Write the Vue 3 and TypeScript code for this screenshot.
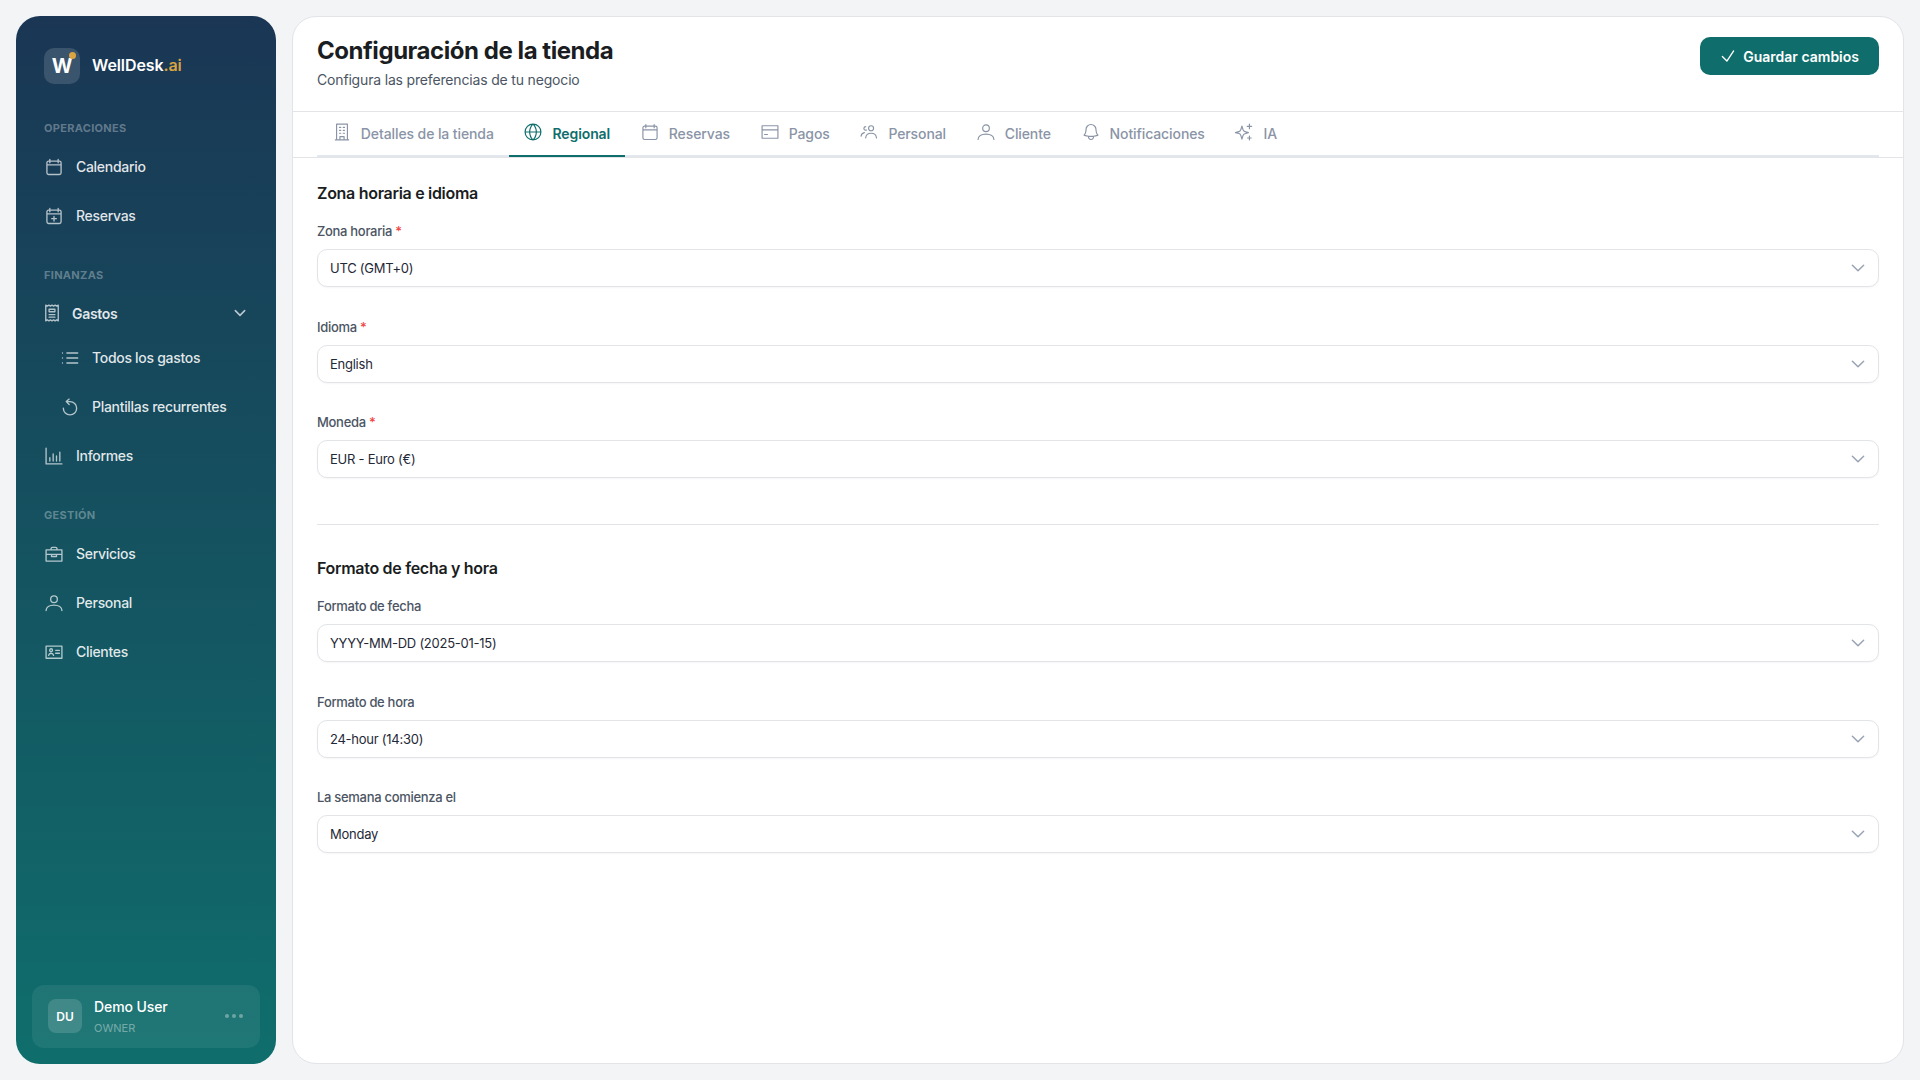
<template>
  <div class="shell">
    <aside class="sidebar">
      <div class="brand">
        <div class="brand-mark">W<span class="brand-dot"></span></div>
        <span class="brand-name">WellDesk<span class="brand-ai">.ai</span></span>
      </div>

      <p class="group-label first">OPERACIONES</p>
      <a class="nav-item"><svg class="nav-icon" viewBox="0 0 24 24"><path :d="icons.calendar" /></svg>Calendario</a>
      <a class="nav-item"><svg class="nav-icon" viewBox="0 0 24 24"><path :d="icons.calendarPlus" /></svg>Reservas</a>

      <p class="group-label">FINANZAS</p>
      <a class="nav-parent">
        <svg class="nav-icon" viewBox="0 0 24 24"><path :d="icons.receipt" /></svg>
        <span>Gastos</span>
        <svg class="nav-chevron" viewBox="0 0 24 24"><path d="M5 8.5l7 7 7-7" /></svg>
      </a>
      <a class="nav-sub"><svg class="nav-icon" viewBox="0 0 24 24"><path :d="icons.list" /></svg>Todos los gastos</a>
      <a class="nav-sub"><svg class="nav-icon" viewBox="0 0 24 24"><path :d="icons.recurring" /></svg>Plantillas recurrentes</a>
      <a class="nav-item"><svg class="nav-icon" viewBox="0 0 24 24"><path :d="icons.chart" /></svg>Informes</a>

      <p class="group-label">GESTIÓN</p>
      <a class="nav-item"><svg class="nav-icon" viewBox="0 0 24 24"><path :d="icons.briefcase" /></svg>Servicios</a>
      <a class="nav-item"><svg class="nav-icon" viewBox="0 0 24 24"><path :d="icons.user" /></svg>Personal</a>
      <a class="nav-item"><svg class="nav-icon" viewBox="0 0 24 24"><path :d="icons.idCard" /></svg>Clientes</a>

      <div class="user-card">
        <div class="avatar">DU</div>
        <div class="user-text">
          <span class="user-name">Demo User</span>
          <span class="user-role">OWNER</span>
        </div>
        <div class="user-more"><i></i><i></i><i></i></div>
      </div>
    </aside>

    <main class="panel">
      <header class="panel-header">
        <div>
          <h1>Configuración de la tienda</h1>
          <p>Configura las preferencias de tu negocio</p>
        </div>
        <button class="save-btn" type="button">
          <svg viewBox="0 0 24 24"><path d="M4.5 12.75l6 6 9-13.5" /></svg>
          Guardar cambios
        </button>
      </header>

      <div class="tabs-row">
        <nav class="tabs">
          <a v-for="tab in tabs" :key="tab.label" class="tab" :class="{ active: tab.label === activeTab }">
            <svg viewBox="0 0 24 24"><path :d="tab.icon" /></svg>
            <span>{{ tab.label }}</span>
          </a>
        </nav>
      </div>

      <section class="form">
        <template v-for="(section, i) in sections" :key="section.title">
          <hr v-if="i > 0" class="divider" />
          <h2>{{ section.title }}</h2>
          <div v-for="field in section.fields" :key="field.label" class="field">
            <label>{{ field.label }} <span v-if="field.required" class="req">*</span></label>
            <div class="select-wrap">
              <select class="select">
                <option>{{ field.value }}</option>
              </select>
              <svg class="select-chevron" viewBox="0 0 24 24"><path d="M4.5 8.25l7.5 7.5 7.5-7.5" /></svg>
            </div>
          </div>
        </template>
      </section>
    </main>
  </div>
</template>

<script setup lang="ts">
import { ref } from 'vue';

const icons = {
  calendar: 'M7 3v4M17 3v4M3.5 9.5h17M5.5 5h13a2 2 0 0 1 2 2v12a2 2 0 0 1-2 2h-13a2 2 0 0 1-2-2V7a2 2 0 0 1 2-2Z',
  calendarPlus: 'M7 3v4M17 3v4M3.5 9.5h17M5.5 5h13a2 2 0 0 1 2 2v12a2 2 0 0 1-2 2h-13a2 2 0 0 1-2-2V7a2 2 0 0 1 2-2ZM12 12.5v5.5M9.2 15.2h5.6',
  receipt: 'M4.5 2.5l1.9 1.2 1.9-1.2 1.8 1.2L12 2.5l1.9 1.2 1.9-1.2 1.8 1.2 1.9-1.2v19l-1.9-1.2-1.8 1.2-1.9-1.2-1.9 1.2-1.9-1.2-1.8 1.2-1.9-1.2-1.9 1.2ZM8.5 7.5h7v3h-7ZM8.5 14h7M8.5 17h7',
  list: 'M8.25 6h13M8.25 12h13M8.25 18h13M3 6h.01M3 12h.01M3 18h.01',
  recurring: 'M11 2.5 7.5 5.5 11 9M7.5 5.5H12a8 8 0 1 1-8 8',
  chart: 'M2.5 2.5v19h19M7 18v-4M11 18V9.5M15 18v-6M19 18V7.5',
  briefcase: 'M8.5 7V5.5A1.5 1.5 0 0 1 10 4h4a1.5 1.5 0 0 1 1.5 1.5V7M2.5 7h19v13.5h-19ZM2.5 12.5h19M9 12.5V15h6v-2.5',
  user: 'M16 7.5a4 4 0 1 1-8 0 4 4 0 0 1 8 0ZM2.5 21c0-4 4-6.5 9.5-6.5s9.5 2.5 9.5 6.5',
  idCard: 'M2.5 5h19v14.5h-19ZM14 10h4.5M14 13.5h4.5M5.5 16c.4-1.7 1.5-2.5 3-2.5s2.6.8 3 2.5M10.2 9.8a1.7 1.7 0 1 1-3.4 0 1.7 1.7 0 0 1 3.4 0Z',
  building: 'M4 21.5h16M5.5 2.5h13v19h-13ZM9 6.5h1.5M13.5 6.5H15M9 10h1.5M13.5 10H15M9 13.5h1.5M13.5 13.5H15M9.5 21.5v-4h5v4',
  globe: 'M21.5 12a9.5 9.5 0 1 1-19 0 9.5 9.5 0 0 1 19 0ZM12 2.5c2.6 2.5 4 5.8 4 9.5s-1.4 7-4 9.5c-2.6-2.5-4-5.8-4-9.5s1.4-7 4-9.5ZM2.5 12h19',
  card: 'M2.5 4.5h19v15h-19ZM2.5 9.5h19M5.5 15H9',
  users: 'M17.5 7.5a3 3 0 1 1-6 0 3 3 0 0 1 6 0ZM8 19c.3-3.5 2.8-5.5 6.5-5.5S20.7 15.5 21 19M8 5.5a2.2 2.2 0 1 0 1 4.2M2.5 17c.3-2.5 1.6-4 4-4.3',
  bell: 'M14.857 17.082a23.848 23.848 0 0 0 5.454-1.31A8.967 8.967 0 0 1 18 9.75V9A6 6 0 0 0 6 9v.75a8.967 8.967 0 0 1-2.312 6.022c1.733.64 3.56 1.085 5.455 1.31m5.714 0a24.255 24.255 0 0 1-5.714 0m5.714 0a3 3 0 1 1-5.714 0',
  sparkles: 'M9.5 5l1.3 4.2a3.5 3.5 0 0 0 2.3 2.3l4.2 1.3-4.2 1.3a3.5 3.5 0 0 0-2.3 2.3l-1.3 4.1-1.3-4.4a3.5 3.5 0 0 0-2.3-2.3l-4.2-1 4.2-1.3a3.5 3.5 0 0 0 2.3-2.3ZM18.5 2.5V8M15.8 5.2h5.4M18.5 17v4.5M16.3 19.2h4.4',
};

const tabs = [
  { label: 'Detalles de la tienda', icon: icons.building },
  { label: 'Regional', icon: icons.globe },
  { label: 'Reservas', icon: icons.calendar },
  { label: 'Pagos', icon: icons.card },
  { label: 'Personal', icon: icons.users },
  { label: 'Cliente', icon: icons.user },
  { label: 'Notificaciones', icon: icons.bell },
  { label: 'IA', icon: icons.sparkles },
];

const activeTab = ref('Regional');

const sections = [
  {
    title: 'Zona horaria e idioma',
    fields: [
      { label: 'Zona horaria', required: true, value: 'UTC (GMT+0)' },
      { label: 'Idioma', required: true, value: 'English' },
      { label: 'Moneda', required: true, value: 'EUR - Euro (€)' },
    ],
  },
  {
    title: 'Formato de fecha y hora',
    fields: [
      { label: 'Formato de fecha', required: false, value: 'YYYY-MM-DD (2025-01-15)' },
      { label: 'Formato de hora', required: false, value: '24-hour (14:30)' },
      { label: 'La semana comienza el', required: false, value: 'Monday' },
    ],
  },
];
</script>

<style>
html,
body {
  margin: 0;
  background: #f3f4f6;
}
</style>

<style scoped>
.shell {
  display: flex;
  gap: 16px;
  box-sizing: border-box;
  height: 1080px;
  padding: 16px;
  font-family: Inter, 'Liberation Sans', sans-serif;
  color: #1a1d21;
  letter-spacing: -0.3px;
}

.sidebar {
  display: flex;
  flex-direction: column;
  flex: none;
  box-sizing: border-box;
  width: 260px;
  padding: 32px 16px 16px;
  border-radius: 24px;
  background: linear-gradient(180deg, #1a3654 0%, #0f6e6c 100%);
}

.brand {
  display: flex;
  align-items: center;
  gap: 12px;
  padding: 0 12px;
}

.brand-mark {
  position: relative;
  display: flex;
  align-items: center;
  justify-content: center;
  width: 36px;
  height: 36px;
  border-radius: 10px;
  background: rgba(255, 255, 255, 0.14);
  color: #fff;
  font-size: 20px;
  font-weight: 700;
}

.brand-dot {
  position: absolute;
  top: 4px;
  right: 4px;
  width: 7px;
  height: 7px;
  border-radius: 50%;
  background: #d9a441;
}

.brand-name {
  margin-top: -2px;
  color: #fff;
  font-size: 16px;
  font-weight: 600;
  letter-spacing: -0.1px;
}

.brand-ai {
  color: #d9a441;
}

.group-label {
  margin: 28px 12px 7px;
  color: rgba(255, 255, 255, 0.33);
  font-size: 11px;
  font-weight: 700;
  line-height: 14px;
  letter-spacing: 0.3px;
}

.group-label.first {
  margin-top: 37px;
}

.nav-item,
.nav-sub,
.nav-parent {
  display: flex;
  align-items: center;
  height: 49px;
  color: rgba(255, 255, 255, 0.88);
  font-size: 14px;
  font-weight: 500;
}

.nav-item {
  gap: 12px;
  padding-left: 12px;
}

.nav-icon {
  flex: none;
  width: 20px;
  height: 20px;
  fill: none;
  stroke: rgba(255, 255, 255, 0.68);
  stroke-width: 1.6;
  stroke-linecap: round;
  stroke-linejoin: round;
}

.nav-parent {
  gap: 10px;
  height: 40px;
  margin-top: 4px;
  padding-left: 10px;
  font-weight: 600;
}

.nav-chevron {
  width: 16px;
  height: 16px;
  margin-left: auto;
  margin-right: 12px;
  fill: none;
  stroke: rgba(255, 255, 255, 0.7);
  stroke-width: 2.4;
  stroke-linecap: round;
  stroke-linejoin: round;
}

.nav-sub {
  gap: 12px;
  padding-left: 28px;
}

.user-card {
  display: flex;
  align-items: center;
  gap: 12px;
  height: 63px;
  box-sizing: border-box;
  margin-top: auto;
  padding: 0 16px 1px;
  border-radius: 12px;
  background: rgba(255, 255, 255, 0.07);
}

.avatar {
  display: flex;
  align-items: center;
  justify-content: center;
  width: 34px;
  height: 34px;
  border-radius: 8px;
  background: rgba(255, 255, 255, 0.15);
  color: #fff;
  font-size: 12px;
  font-weight: 600;
  letter-spacing: 0;
}

.user-text {
  display: flex;
  flex-direction: column;
  gap: 6px;
}

.user-name {
  color: #fff;
  font-size: 14px;
  font-weight: 500;
  line-height: 17px;
  letter-spacing: -0.1px;
}

.user-role {
  color: rgba(255, 255, 255, 0.4);
  font-size: 11px;
  line-height: 14px;
  letter-spacing: 0;
}

.user-more {
  display: flex;
  gap: 3px;
  margin-left: auto;
  margin-right: 1px;
}

.user-more i {
  width: 4px;
  height: 4px;
  border-radius: 50%;
  background: rgba(255, 255, 255, 0.35);
}

.panel {
  flex: 1;
  min-width: 0;
  box-sizing: border-box;
  border: 1px solid #e2e4e8;
  border-radius: 24px;
  background: #fff;
}

.panel-header {
  display: flex;
  justify-content: space-between;
  height: 95px;
  box-sizing: border-box;
  padding: 20px 24px 0;
  border-bottom: 1px solid #e2e4e8;
}

.panel-header h1 {
  margin: -1px 0 0;
  font-size: 24px;
  font-weight: 700;
  line-height: 30px;
  letter-spacing: -0.45px;
}

.panel-header p {
  margin: 4px 0 0;
  color: #4b5563;
  font-size: 14px;
  line-height: 20px;
  letter-spacing: -0.17px;
}

.save-btn {
  display: flex;
  align-items: center;
  gap: 6px;
  height: 38px;
  padding: 0 20px 0 19px;
  border: none;
  border-radius: 10px;
  background: #0f6e6c;
  color: #fff;
  font: inherit;
  font-size: 14px;
  font-weight: 600;
}

.save-btn svg {
  width: 18px;
  height: 18px;
  fill: none;
  stroke: #fff;
  stroke-width: 1.8;
  stroke-linecap: round;
  stroke-linejoin: round;
}

.tabs-row {
  padding: 0 24px;
  border-bottom: 1px solid #e2e4e8;
}

.tabs {
  display: flex;
  height: 45px;
  box-sizing: border-box;
  border-bottom: 2px solid #e2e8ee;
}

.tab {
  display: flex;
  align-items: center;
  gap: 9px;
  height: 45px;
  box-sizing: border-box;
  padding: 0 14.85px;
  border-bottom: 2px solid transparent;
  color: #8a94a6;
  font-size: 14px;
  font-weight: 500;
  letter-spacing: -0.1px;
}

.tab svg {
  width: 20px;
  height: 20px;
  margin-top: -3px;
  fill: none;
  stroke: currentColor;
  stroke-width: 1.4;
  stroke-linecap: round;
  stroke-linejoin: round;
}

.tab.active {
  border-bottom-color: #0f6e6c;
  color: #0f6e6c;
  font-weight: 600;
}

.form {
  padding: 23px 24px 0;
}

.form h2 {
  margin: 0 0 16px;
  font-size: 16px;
  font-weight: 600;
  line-height: 24px;
}

.divider {
  margin: 46px 0 31px;
  border: none;
  border-top: 1px solid #e2e4e8;
}

.field + .field {
  margin-top: 29.5px;
}

.field label {
  display: block;
  margin-bottom: 8px;
  color: #4b5563;
  font-size: 13px;
  font-weight: 500;
  line-height: 20px;
}

.req {
  color: #ef4444;
}

.select-wrap {
  position: relative;
}

.select {
  display: block;
  width: 100%;
  height: 38px;
  box-sizing: border-box;
  padding: 0 40px 0 12px;
  border: 1px solid #e2e4e8;
  border-radius: 10px;
  background: #fff;
  box-shadow: 0 1px 2px rgba(0, 0, 0, 0.04);
  color: #1f2937;
  font: inherit;
  font-size: 13px;
  letter-spacing: -0.25px;
  appearance: none;
}

.select-chevron {
  position: absolute;
  top: 10px;
  right: 12px;
  width: 18px;
  height: 18px;
  fill: none;
  stroke: #9aa3b5;
  stroke-width: 2;
  stroke-linecap: round;
  stroke-linejoin: round;
  pointer-events: none;
}
</style>
